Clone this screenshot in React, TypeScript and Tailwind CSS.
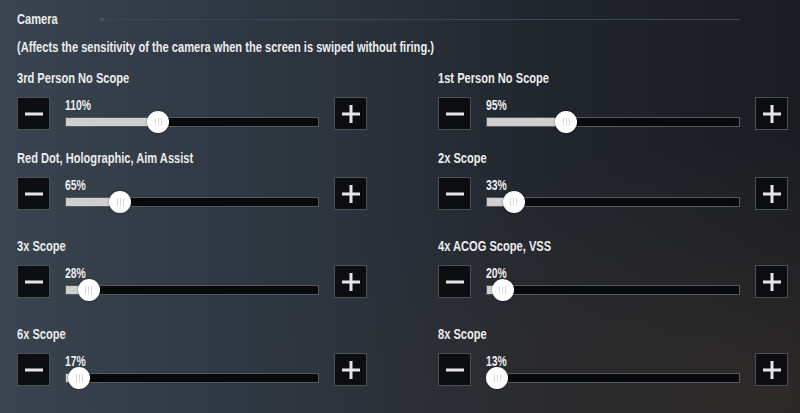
type Setting = {
  label: string;
  value: number;
};

const rows: [Setting, Setting][] = [
  [
    { label: "3rd Person No Scope", value: 110 },
    { label: "1st Person No Scope", value: 95 },
  ],
  [
    { label: "Red Dot, Holographic, Aim Assist", value: 65 },
    { label: "2x Scope", value: 33 },
  ],
  [
    { label: "3x Scope", value: 28 },
    { label: "4x ACOG Scope, VSS", value: 20 },
  ],
  [
    { label: "6x Scope", value: 17 },
    { label: "8x Scope", value: 13 },
  ],
];

const rowMargins = ["mt-[13px]", "mt-[19px]", "mt-[27px]", "mt-[27px]"];

// the game uses a narrow display face; squeeze Liberation Sans to match
function Narrow({ children }: { children: React.ReactNode }) {
  return (
    <span className="inline-block origin-left scale-x-[0.74] whitespace-nowrap">
      {children}
    </span>
  );
}

function StepButton({ kind }: { kind: "minus" | "plus" }) {
  return (
    <div className="flex h-[33px] w-[33px] shrink-0 items-center justify-center border border-[#4d5156] bg-[#0b0d10]">
      <svg width="20" height="20" viewBox="0 0 20 20">
        <rect x="1" y="8.5" width="18" height="3" fill="#e6e6e6" />
        {kind === "plus" && <rect x="8.5" y="1" width="3" height="18" fill="#e6e6e6" />}
      </svg>
    </div>
  );
}

function Slider({ value }: { value: number }) {
  const width = 254;
  const center = Math.max(11, (value / 300) * width);

  return (
    <div className="relative h-[33px] w-[254px] shrink-0">
      <div className="text-[14px] font-bold leading-[16px] text-[#ededed]">
        <Narrow>{value}%</Narrow>
      </div>
      <div className="absolute left-0 top-[20px] h-[10px] w-[254px] border border-[#55585c] bg-[#08090b]">
        <div className="h-full bg-[#cfcfcf]" style={{ width: center }} />
      </div>
      <div
        className="absolute top-[14px] flex h-[22px] w-[22px] items-center justify-center gap-[2px] rounded-full bg-white shadow-[0_0_2px_rgba(0,0,0,0.5)]"
        style={{ left: center - 11 }}
      >
        <span className="h-[8px] w-[1px] bg-[#d8d8d8]" />
        <span className="h-[8px] w-[1px] bg-[#d8d8d8]" />
        <span className="h-[8px] w-[1px] bg-[#d8d8d8]" />
      </div>
    </div>
  );
}

function SettingItem({ setting }: { setting: Setting }) {
  return (
    <div>
      <div className="text-[15px] font-bold leading-[18px] text-[#ececec]">
        <Narrow>{setting.label}</Narrow>
      </div>
      <div className="mt-[10px] flex items-center gap-[15px]">
        <StepButton kind="minus" />
        <Slider value={setting.value} />
        <StepButton kind="plus" />
      </div>
    </div>
  );
}

export default function App() {
  return (
    <div className="relative h-[413px] w-[800px] overflow-hidden bg-[linear-gradient(90deg,#38444f_0%,#2c343e_40%,#20252c_70%,#1a1d22_100%)] font-['Liberation_Sans',sans-serif]">
      <div className="pointer-events-none absolute inset-0 bg-[radial-gradient(ellipse_at_95%_95%,rgba(80,62,48,0.35)_0%,rgba(0,0,0,0)_45%)]" />
      <div className="relative px-[17px] pt-[10px]">
        <div className="flex items-center">
          <div className="w-[83px] text-[15px] font-bold leading-[18px] text-[#ececec]">
            <Narrow>Camera</Narrow>
          </div>
          <div className="h-[4px] w-[4px] rounded-full bg-[#46525e]" />
          <div className="h-[1px] w-[636px] bg-[#3b4653]" />
        </div>
        <div className="mt-[10px] text-[15px] font-bold leading-[18px] text-[#ececec]">
          <Narrow>(Affects the sensitivity of the camera when the screen is swiped without firing.)</Narrow>
        </div>

        {rows.map((pair, i) => (
          <div key={i} className={`${rowMargins[i]} grid grid-cols-[351px_351px] gap-x-[70px]`}>
            <SettingItem setting={pair[0]} />
            <SettingItem setting={pair[1]} />
          </div>
        ))}
      </div>
    </div>
  );
}
